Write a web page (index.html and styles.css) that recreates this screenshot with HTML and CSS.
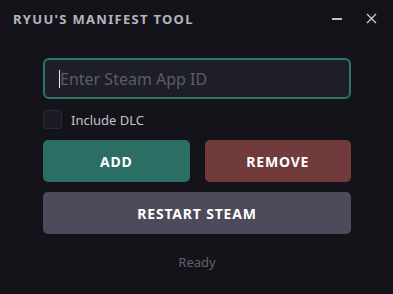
FILE: index.html
```html
<!DOCTYPE html>
<html lang="en">
<head>
    <meta charset="UTF-8">
    <meta name="viewport" content="width=device-width, initial-scale=1.0">
    <title>Ryuu's Manifest Tool</title>
    <link rel="stylesheet" href="styles.css">
</head>
<body>
    <div class="titlebar">
        <span class="title">RYUU'S MANIFEST TOOL</span>
        <div class="window-controls">
            <span class="ctl ctl-min"></span>
            <span class="ctl ctl-close">
                <svg width="11" height="11" viewBox="0 0 11 11"><path d="M1 1L10 10M10 1L1 10" stroke="#c8c8cc" stroke-width="1.4"/></svg>
            </span>
        </div>
    </div>

    <div class="container">
        <div class="input-box">
            <span class="caret"></span>
            <span class="placeholder">Enter Steam App ID</span>
        </div>
        <label class="check-row">
            <span class="checkbox"></span>
            <span>Include DLC</span>
        </label>
        <div class="btn-row">
            <button class="btn btn-add">ADD</button>
            <button class="btn btn-remove">REMOVE</button>
        </div>
        <button class="btn btn-restart">RESTART STEAM</button>
        <div class="status">Ready</div>
    </div>
</body>
</html>
```

FILE: styles.css
```css
body {
    margin: 0;
    width: 393px;
    height: 294px;
    background-color: #14131a;
    font-family: "Noto Sans", "Open Sans", sans-serif;
    overflow: hidden;
}

.titlebar {
    display: flex;
    align-items: center;
    justify-content: space-between;
    height: 37px;
    padding: 0 16px 0 13px;
}

.title {
    color: #b3b6bd;
    font-size: 13px;
    font-weight: bold;
    letter-spacing: 1.3px;
}

.window-controls {
    display: flex;
    align-items: center;
    gap: 24px;
}

.ctl {
    display: flex;
    align-items: center;
    justify-content: center;
}

.ctl-min {
    width: 10px;
    height: 2px;
    background-color: #c0c0c4;
}

.container {
    padding: 21px 42px 0 43px;
}

.input-box {
    display: flex;
    align-items: center;
    height: 37px;
    border: 2px solid #2b7668;
    border-radius: 6px;
    background-color: #1e1e28;
    padding-left: 14px;
}

.caret {
    width: 1px;
    height: 18px;
    background-color: #e8e8e8;
}

.placeholder {
    color: #5b5d68;
    font-size: 16px;
}

.check-row {
    display: flex;
    align-items: center;
    gap: 9px;
    margin-top: 11px;
    color: #c3c4ca;
    font-size: 13px;
}

.checkbox {
    width: 17px;
    height: 17px;
    border: 1px solid #2b2b36;
    border-radius: 3px;
    background-color: #1b1b24;
}

.btn-row {
    display: flex;
    gap: 15px;
    margin-top: 11px;
}

.btn {
    height: 42px;
    border: none;
    border-radius: 5px;
    color: white;
    font-family: "Noto Sans", "Open Sans", sans-serif;
    font-size: 14px;
    font-weight: bold;
    letter-spacing: 0.8px;
    cursor: pointer;
}

.btn-add {
    flex: 1;
    background-color: #2b6e64;
}

.btn-remove {
    flex: 1;
    background-color: #713a3b;
}

.btn-restart {
    display: block;
    width: 100%;
    margin-top: 10px;
    background-color: #4d4b5b;
}

.status {
    margin-top: 19px;
    text-align: center;
    color: #5e626a;
    font-size: 13px;
}
```
